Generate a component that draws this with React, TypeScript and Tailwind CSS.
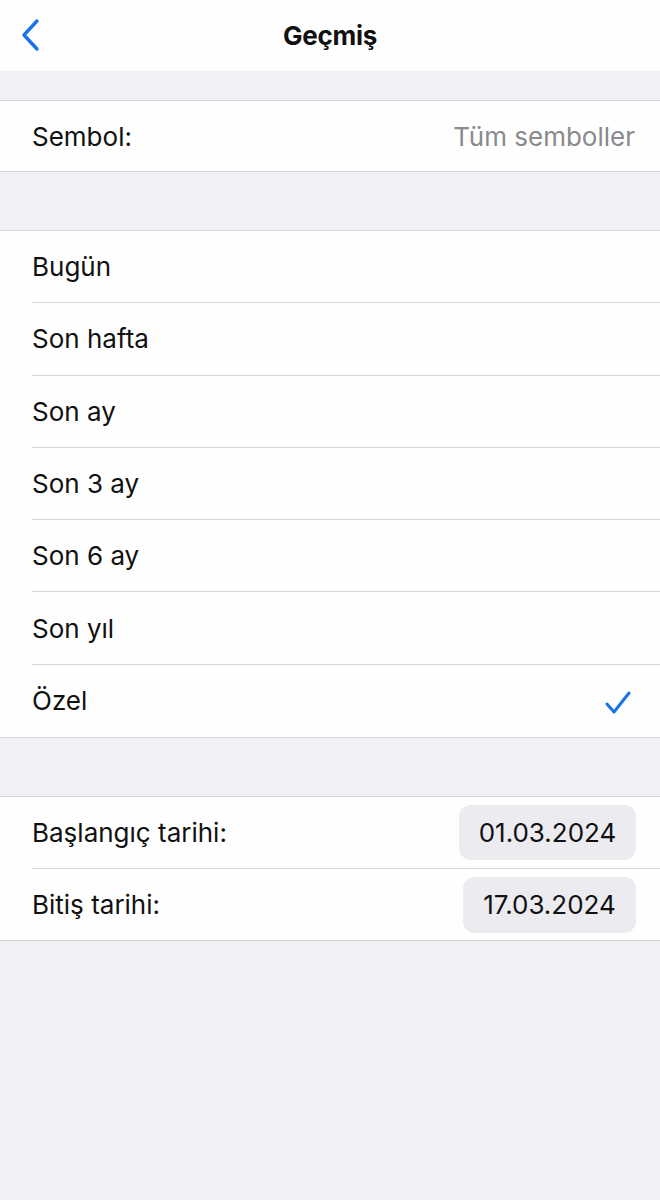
const periods = ['Bugün', 'Son hafta', 'Son ay', 'Son 3 ay', 'Son 6 ay', 'Son yıl', 'Özel'];

const font = { fontFamily: 'Inter, "Liberation Sans", sans-serif' };

export default function App() {
  const selected = 'Özel';

  return (
    <div className="min-h-[1200px] bg-[#f0f0f5] text-[26px] text-[#111]" style={font}>
      {/* nav bar */}
      <div className="relative flex h-[71px] items-center justify-center bg-[#fefefe]">
        <button className="absolute left-[18px] top-[18px] text-[#1a73e8]">
          <svg width="26" height="34" viewBox="0 0 26 34" fill="none">
            <path d="M19 3 L6 17 L19 31" stroke="currentColor" strokeWidth="3.4" strokeLinecap="round" strokeLinejoin="round" />
          </svg>
        </button>
        <h1 className="text-[26px] font-bold tracking-[-0.3px]">Geçmiş</h1>
      </div>

      <div className="h-[29px]" />

      {/* symbol */}
      <div className="flex h-[72px] items-center justify-between border-y border-[#d6d6da] bg-[#fefefe] pl-[32px] pr-[25px]">
        <span>Sembol:</span>
        <span className="text-[#8a8a8e]">Tüm semboller</span>
      </div>

      <div className="h-[58px]" />

      {/* periods */}
      <div className="border-y border-[#d6d6da] bg-[#fefefe]">
        {periods.map((p, i) => (
          <div key={p} className="pl-[32px]">
            <div
              className={
                'flex h-[72.3px] items-center justify-between pr-[28px] ' +
                (i < periods.length - 1 ? 'border-b border-[#d6d6da]' : '')
              }
            >
              <span>{p}</span>
              {p === selected && (
                <svg width="28" height="26" viewBox="0 0 28 26" fill="none" className="mt-[4px] text-[#1a73e8]">
                  <path d="M3 14 L10 22 L25 3" stroke="currentColor" strokeWidth="3" strokeLinecap="round" strokeLinejoin="round" />
                </svg>
              )}
            </div>
          </div>
        ))}
      </div>

      <div className="h-[58px]" />

      {/* dates */}
      <div className="border-y border-[#d6d6da] bg-[#fefefe]">
        <div className="pl-[32px]">
          <div className="flex h-[72px] items-center justify-between border-b border-[#d6d6da] pr-[24px]">
            <span>Başlangıç tarihi:</span>
            <span className="flex h-[55px] w-[177px] items-center justify-center rounded-[12px] bg-[#ebebf0]">01.03.2024</span>
          </div>
        </div>
        <div className="pl-[32px]">
          <div className="flex h-[71px] items-center justify-between pr-[24px]">
            <span>Bitiş tarihi:</span>
            <span className="flex h-[56px] w-[173px] items-center justify-center rounded-[12px] bg-[#ebebf0]">17.03.2024</span>
          </div>
        </div>
      </div>
    </div>
  );
}
